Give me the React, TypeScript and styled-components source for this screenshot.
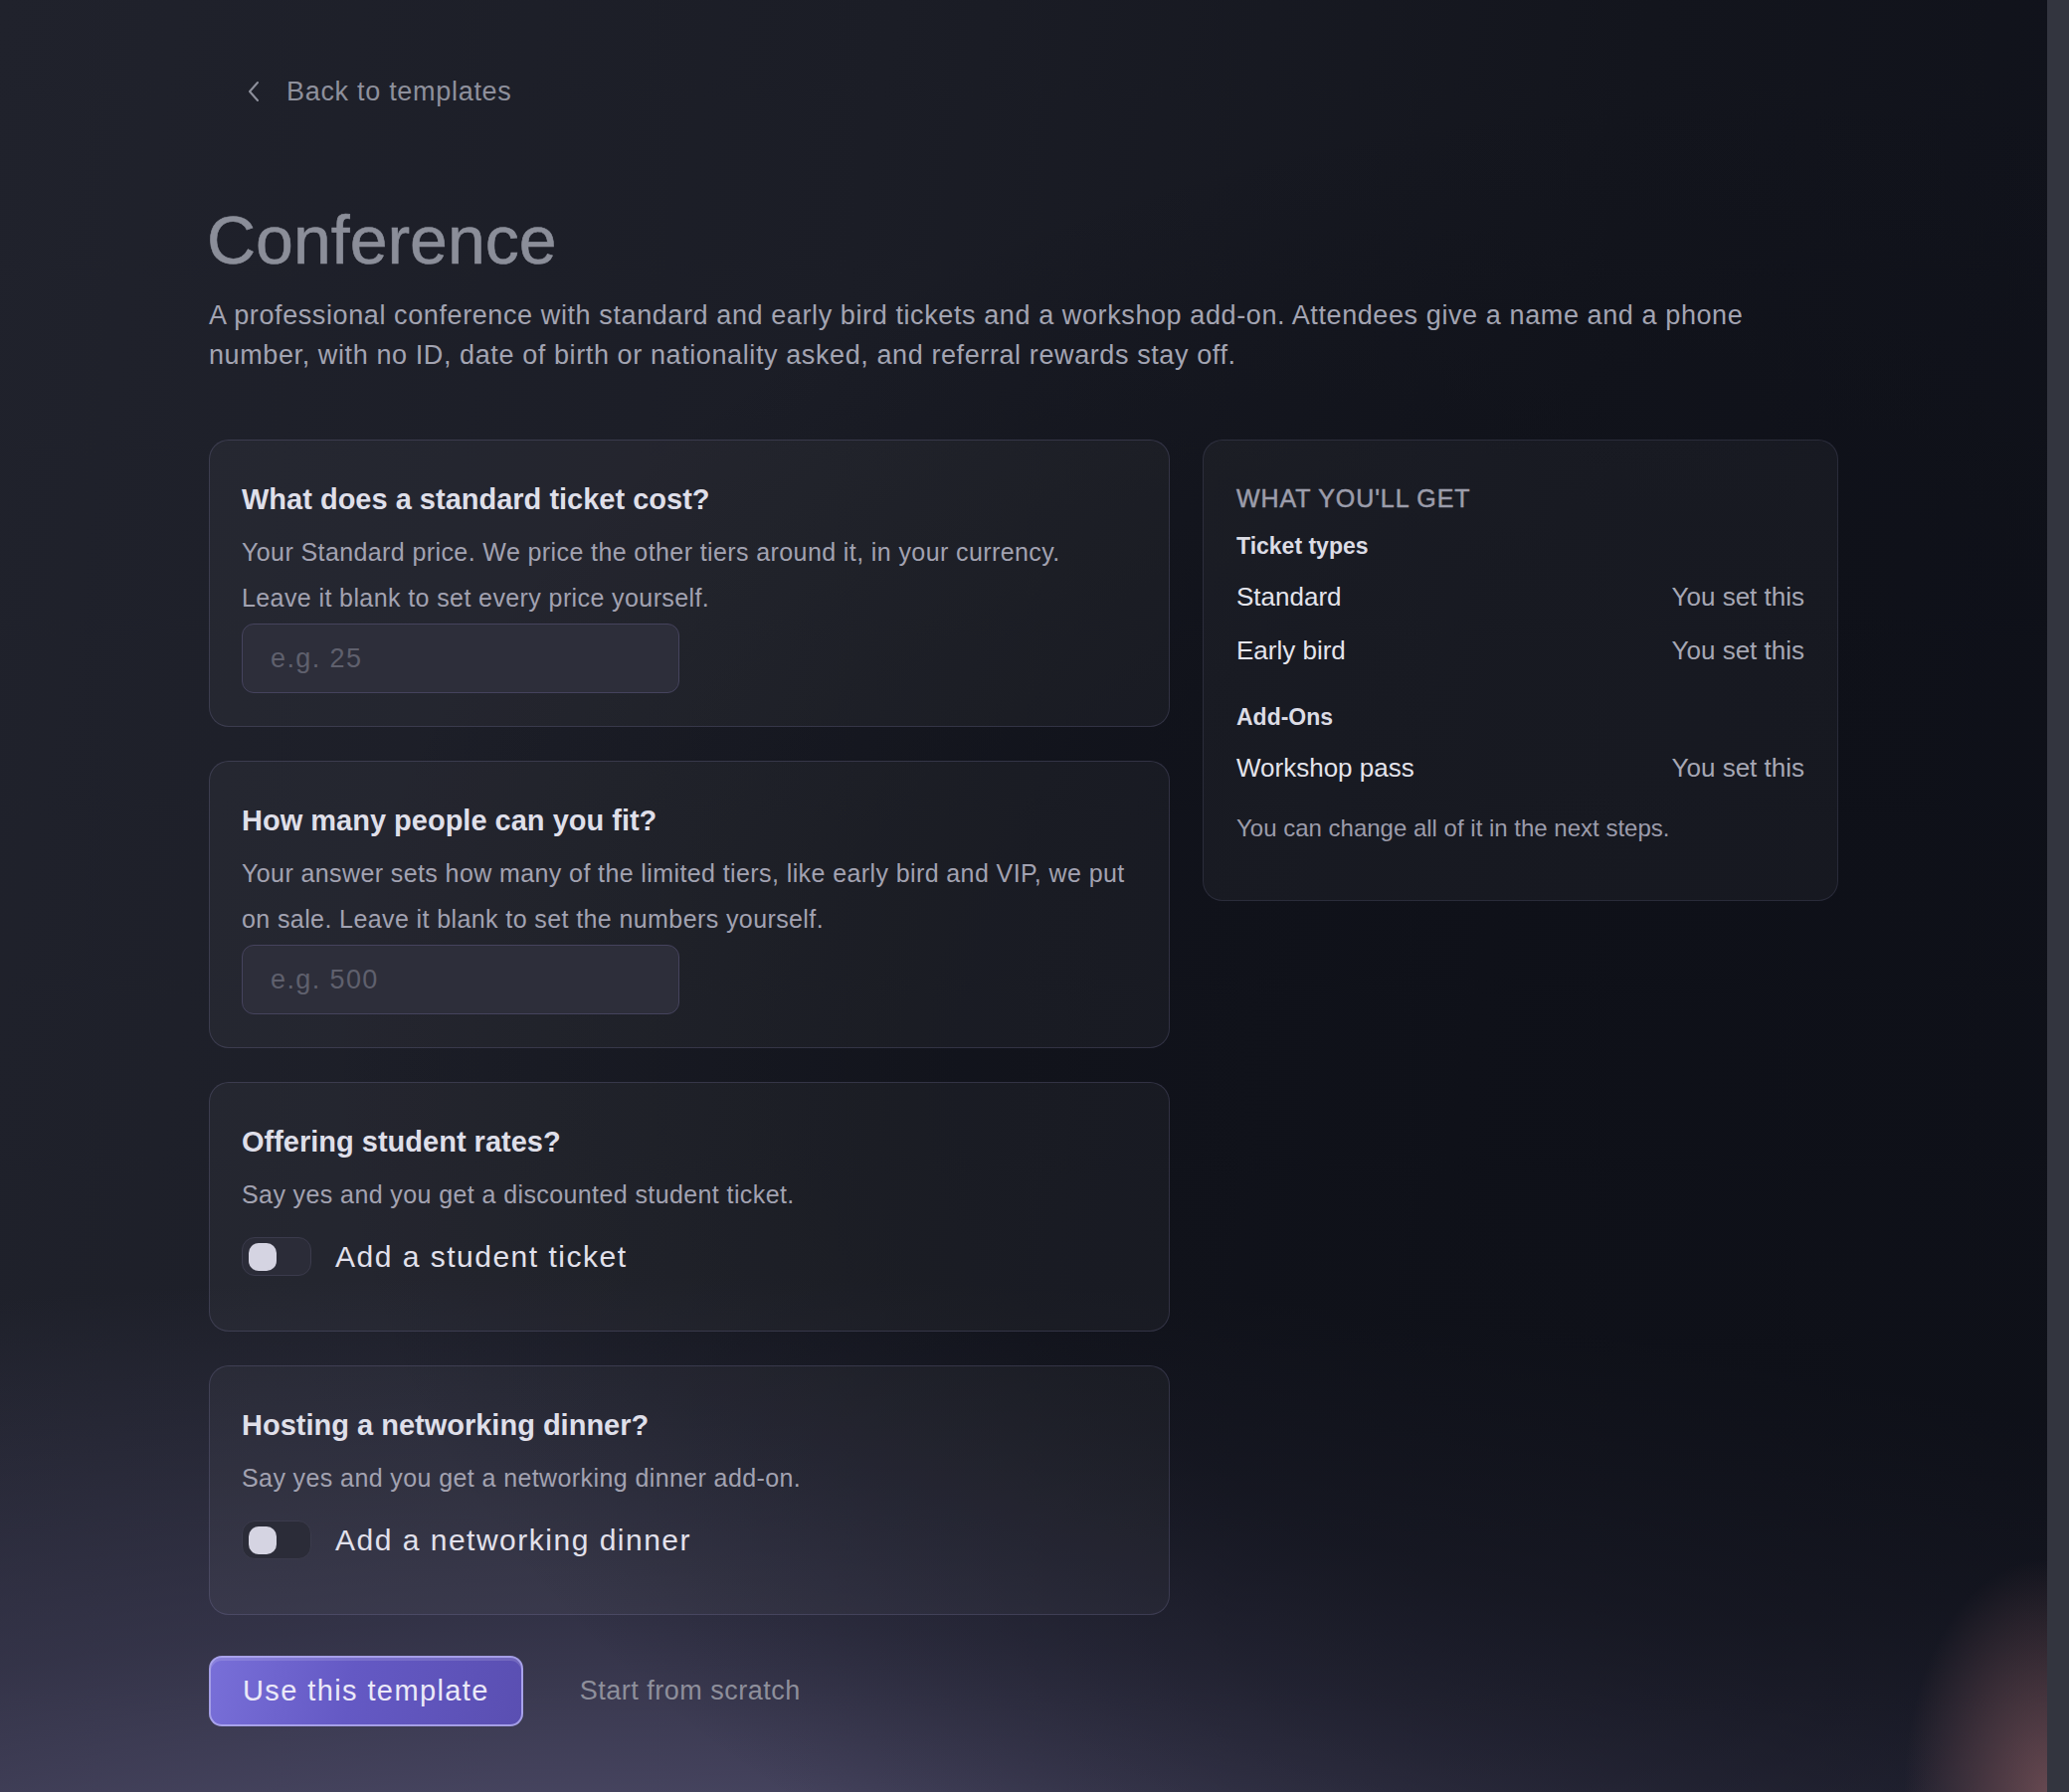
import styled, { createGlobalStyle } from 'styled-components';

const GlobalStyle = createGlobalStyle`
  html, body {
    margin: 0;
    padding: 0;
  }
  body {
    font-family: "Liberation Sans", Arial, Helvetica, sans-serif;
    background: #161821;
  }
  * {
    box-sizing: border-box;
  }
`;

type Item = { label: string; value: string };

const ticketTypes: Item[] = [
  { label: 'Standard', value: 'You set this' },
  { label: 'Early bird', value: 'You set this' },
];

const addOns: Item[] = [{ label: 'Workshop pass', value: 'You set this' }];

function ChevronLeft() {
  return (
    <svg width="14" height="22" viewBox="0 0 14 22" fill="none">
      <polyline
        points="11,2 3,11 11,20"
        stroke="#8e909c"
        strokeWidth="2"
        strokeLinecap="round"
        strokeLinejoin="round"
      />
    </svg>
  );
}

function Toggle({ label }: { label: string }) {
  return (
    <StyledToggleRow>
      <StyledTrack>
        <StyledKnob />
      </StyledTrack>
      <span>{label}</span>
    </StyledToggleRow>
  );
}

function SummarySection({ title, items, first }: { title: string; items: Item[]; first?: boolean }) {
  return (
    <StyledSection $first={first}>
      <h4>{title}</h4>
      <ul>
        {items.map((item) => (
          <StyledSummaryRow key={item.label}>
            <span>{item.label}</span>
            <em>{item.value}</em>
          </StyledSummaryRow>
        ))}
      </ul>
    </StyledSection>
  );
}

function TemplateSetup() {
  return (
    <StyledRoot>
      <GlobalStyle />
      <StyledMain>
        <StyledContainer>
          <StyledBack type="button">
            <ChevronLeft />
            Back to templates
          </StyledBack>

          <StyledTitle>Conference</StyledTitle>
          <StyledIntro>
            A professional conference with standard and early bird tickets and a workshop add-on. Attendees give a
            name and a phone number, with no ID, date of birth or nationality asked, and referral rewards stay off.
          </StyledIntro>

          <StyledGrid>
            <StyledQuestions>
              <StyledCard>
                <h3>What does a standard ticket cost?</h3>
                <StyledHelp>Your Standard price. We price the other tiers around it, in your currency.</StyledHelp>
                <StyledHelp>Leave it blank to set every price yourself.</StyledHelp>
                <StyledInput placeholder="e.g. 25" />
              </StyledCard>

              <StyledCard>
                <h3>How many people can you fit?</h3>
                <StyledHelp>
                  Your answer sets how many of the limited tiers, like early bird and VIP, we put on sale. Leave it
                  blank to set the numbers yourself.
                </StyledHelp>
                <StyledInput placeholder="e.g. 500" />
              </StyledCard>

              <StyledCard>
                <h3>Offering student rates?</h3>
                <StyledHelp>Say yes and you get a discounted student ticket.</StyledHelp>
                <Toggle label="Add a student ticket" />
              </StyledCard>

              <StyledCard>
                <h3>Hosting a networking dinner?</h3>
                <StyledHelp>Say yes and you get a networking dinner add-on.</StyledHelp>
                <Toggle label="Add a networking dinner" />
              </StyledCard>
            </StyledQuestions>

            <StyledSummary>
              <StyledEyebrow>What you'll get</StyledEyebrow>
              <SummarySection title="Ticket types" items={ticketTypes} first />
              <SummarySection title="Add-Ons" items={addOns} />
              <StyledNote>You can change all of it in the next steps.</StyledNote>
            </StyledSummary>
          </StyledGrid>

          <StyledActions>
            <StyledPrimary type="button">Use this template</StyledPrimary>
            <StyledGhost type="button">Start from scratch</StyledGhost>
          </StyledActions>
        </StyledContainer>
      </StyledMain>
      <StyledScrollTrack />
    </StyledRoot>
  );
}

const StyledRoot = styled.div`
  display: flex;
  min-height: 100vh;
`;

const StyledMain = styled.main`
  flex: 1;
  background:
    radial-gradient(7% 13% at 100% 100%, rgba(150, 100, 104, 0.6), rgba(150, 100, 104, 0) 100%),
    radial-gradient(70% 55% at 86% 60%, rgba(14, 16, 24, 0.9) 0%, rgba(14, 16, 24, 0.65) 55%, rgba(14, 16, 24, 0) 100%),
    radial-gradient(140% 48% at 30% 112%, rgba(96, 92, 128, 0.95) 0%, rgba(66, 64, 92, 0.6) 45%, rgba(40, 40, 60, 0) 85%),
    linear-gradient(100deg, #20222c 0%, #1b1d26 38%, #13151d 70%, #0f111a 100%);
`;

const StyledScrollTrack = styled.div`
  width: 22px;
  flex-shrink: 0;
  background: #33353f;
`;

const StyledContainer = styled.div`
  width: 1638px;
  margin: 0 auto;
  padding: 76px 0 64px;
`;

const StyledBack = styled.button`
  display: inline-flex;
  align-items: center;
  gap: 26px;
  margin-left: 38px;
  padding: 0;
  border: 0;
  background: none;
  font-family: inherit;
  font-size: 27px;
  line-height: 32px;
  letter-spacing: 0.7px;
  color: #8e909c;
  cursor: pointer;
`;

const StyledTitle = styled.h1`
  margin: 94px 0 0 -2px;
  font-size: 68px;
  font-weight: 400;
  line-height: 78px;
  color: #8b8e99;
  -webkit-text-stroke: 0.6px #8b8e99;
`;

const StyledIntro = styled.p`
  max-width: 1600px;
  margin: 17px 0 0;
  font-size: 27px;
  line-height: 40px;
  letter-spacing: 0.6px;
  color: #a3a4b2;
`;

const StyledGrid = styled.div`
  display: grid;
  grid-template-columns: 966px 639px;
  gap: 33px;
  align-items: start;
  margin-top: 65px;
`;

const StyledQuestions = styled.div`
  display: flex;
  flex-direction: column;
  gap: 34px;
`;

const StyledCard = styled.section`
  padding: 42px 32px 33px;
  border: 1px solid rgba(150, 146, 200, 0.2);
  border-radius: 20px;
  background: rgba(255, 255, 255, 0.035);

  & > h3 {
    margin: 0 0 12px;
    font-size: 29px;
    font-weight: 700;
    line-height: 35px;
    color: #dfdfe9;
  }
`;

const StyledHelp = styled.p`
  margin: 0;
  font-size: 25px;
  line-height: 46px;
  letter-spacing: 0.4px;
  color: #a2a2b1;
`;

const StyledInput = styled.input`
  display: block;
  width: 440px;
  height: 70px;
  margin-top: 3px;
  padding: 0 28px;
  border: 1.5px solid #45435d;
  border-radius: 12px;
  background: #2d2e3a;
  font-family: inherit;
  font-size: 27px;
  letter-spacing: 1.4px;
  color: #e3e3ec;
  outline: none;

  &::placeholder {
    color: #5f606d;
  }
`;

const StyledToggleRow = styled.label`
  display: flex;
  align-items: center;
  gap: 24px;
  padding: 20px 0 22px;

  & > span {
    font-size: 30px;
    line-height: 34px;
    letter-spacing: 1.5px;
    color: #e2e1ec;
  }
`;

const StyledTrack = styled.span`
  display: flex;
  align-items: center;
  width: 70px;
  height: 39px;
  padding: 0 6px;
  border: 1.5px solid #3b3b4c;
  border-radius: 13px;
  background: #2b2c38;
`;

const StyledKnob = styled.span`
  width: 28px;
  height: 28px;
  border-radius: 10px;
  background: #d5d4e2;
`;

const StyledSummary = styled.aside`
  padding: 42px 33px 57px;
  border: 1px solid rgba(130, 130, 170, 0.18);
  border-radius: 20px;
  background: rgba(255, 255, 255, 0.035);
`;

const StyledEyebrow = styled.h2`
  margin: 0;
  font-size: 25px;
  font-weight: 400;
  line-height: 32px;
  letter-spacing: 0.9px;
  text-transform: uppercase;
  color: #9c9dab;
  -webkit-text-stroke: 0.5px #9c9dab;
`;

const StyledSection = styled.div<{ $first?: boolean }>`
  margin-top: ${({ $first }) => ($first ? '17px' : '25px')};

  & > h4 {
    margin: 0 0 9px;
    font-size: 23px;
    font-weight: 700;
    line-height: 30px;
    color: #dcdce5;
  }

  & > ul {
    margin: 0;
    padding: 0;
    list-style: none;
  }
`;

const StyledSummaryRow = styled.li`
  display: flex;
  justify-content: space-between;
  font-size: 26px;
  line-height: 54px;
  color: #e4e4ec;

  & > em {
    font-style: normal;
    color: #a6a7b4;
  }
`;

const StyledNote = styled.p`
  margin: 19px 0 0;
  font-size: 24px;
  line-height: 30px;
  color: #9c9cab;
`;

const StyledActions = styled.div`
  display: flex;
  align-items: center;
  gap: 33px;
  margin-top: 41px;
`;

const StyledPrimary = styled.button`
  height: 71px;
  padding: 0 32px;
  border: 2px solid rgba(178, 172, 238, 0.85);
  border-radius: 13px;
  background: linear-gradient(100deg, #786fd8 0%, #6459c4 45%, #5a4fb2 100%);
  box-shadow: inset 0 3px 0 rgba(255, 255, 255, 0.14);
  font-family: inherit;
  font-size: 29px;
  letter-spacing: 1.4px;
  color: #ebe9f8;
  cursor: pointer;
`;

const StyledGhost = styled.button`
  padding: 0 24px;
  border: 0;
  background: none;
  font-family: inherit;
  font-size: 27px;
  letter-spacing: 0.5px;
  color: #8e8f9b;
  cursor: pointer;
`;

export default TemplateSetup;
